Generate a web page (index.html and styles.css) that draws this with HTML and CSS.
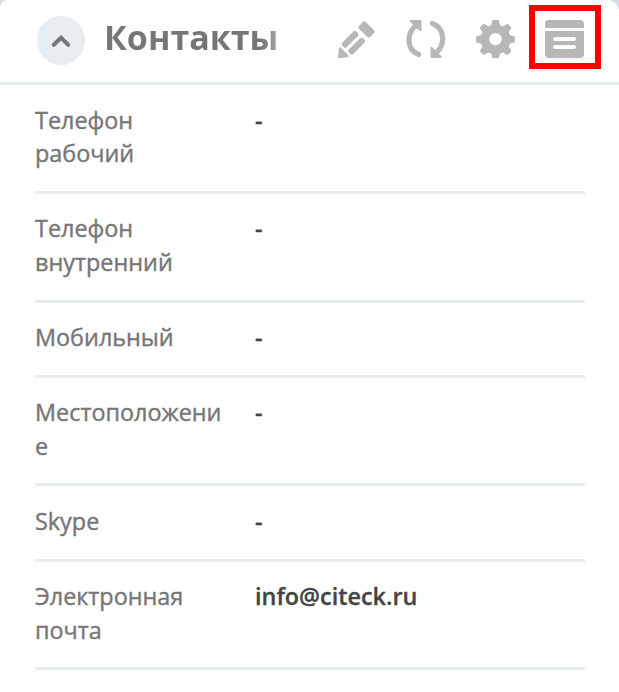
FILE: index.html
```html
<!DOCTYPE html>
<html lang="ru">
<head>
<meta charset="utf-8">
<title>Контакты</title>
<link rel="stylesheet" href="styles.css">
</head>
<body>
<main class="card">
  <header class="header">
    <button class="toggle" aria-label="Свернуть">
      <svg width="48" height="48" viewBox="0 0 48 48"><path d="M16.800 27.800 24 20.800l7.200 7"/></svg>
    </button>
    <h1 class="title">Контакты</h1>
    <nav class="actions">
      <svg class="icon" width="40" height="40" viewBox="0 0 40 40">
        <path d="M3.600 27.300Q2.200 26.500 2 28.500L1 36.500Q1 38.200 2.700 38L10.500 37.200Q12.500 36.800 11.300 35.300Z"/>
        <g transform="translate(1.500 37.500) rotate(-45)">
          <rect x="11" y="-7.800" width="20" height="6.300" rx="2"/>
          <rect x="11" y="1.600" width="20" height="6.300" rx="2"/>
          <rect x="34.800" y="-7.800" width="9.600" height="15.700" rx="2"/>
        </g>
      </svg>
      <svg class="icon" width="40" height="40" viewBox="0 0 40 40">
        <path class="arc" d="M10.500 5C.3 13-.2 29.500 12.600 34.500M26.300 3.300C39.500 8.500 39.500 25 29.500 33.500"/>
        <path d="M4.500 0Q3.300 0 3.700 1.500L7 4.500l5 5 2.300 1.700q1.200.3 1.200-1V1.200q0-1.200-1.200-1.200Z"/>
        <path d="M34.800 38Q36 38 35.600 36.300L32.500 33.500l-5-5-1.800-1.700q-1.200-.3-1.200 1v9q0 1.200 1.200 1.200Z"/>
      </svg>
      <svg class="icon" width="40" height="40" viewBox="0 0 40 40">
        <path fill-rule="evenodd" d="M17.300 0h4.600q1 0 1.200 1l.8 4.100 3.200 1.300 3.500-2.300q.8-.5 1.500.1l2.900 2.900q.7.700.1 1.500l-2.300 3.500 1.300 3.200 3.800.8q1 .2 1 1.200v4.200q0 1-1 1.200l-3.800.8-1.300 3.200 2.300 3.500q.6.800-.1 1.500l-2.900 2.900q-.7.600-1.500.1l-3.500-2.300-3.200 1.300-.8 3.500q-.2 1-1.200 1h-4.600q-1 0-1.200-1l-.8-3.500-3.200-1.300-3.500 2.300q-.8.500-1.500-.1l-2.900-2.900q-.7-.7-.1-1.500l2.300-3.500-1.300-3.200-4.100-.8q-1-.2-1-1.200v-4.200q0-1 1-1.200l4.100-.8 1.300-3.200-2.300-3.500q-.6-.8.1-1.500l2.900-2.900q.7-.6 1.500-.1l3.500 2.300 3.200-1.300.8-4.100q.2-1 1.200-1ZM19.500 13a6.200 6.200 0 1 0 0 12.400 6.200 6.200 0 0 0 0-12.400Z"/>
      </svg>
      <span class="highlight">
        <svg class="icon" width="40" height="40" viewBox="0 0 40 40">
          <path d="M4 0h31q4 0 4 4v4H0V4Q0 0 4 0Z"/>
          <path fill-rule="evenodd" d="M0 11h39v23q0 4-4 4H4q-4 0-4-4ZM10 17a2 2 0 0 0 0 4h19a2 2 0 0 0 0-4ZM10 25a2 2 0 0 0 0 4h19a2 2 0 0 0 0-4Z"/>
        </svg>
      </span>
    </nav>
  </header>
  <dl class="fields">
    <div class="row"><dt>Телефон рабочий</dt><dd>-</dd></div>
    <div class="row"><dt>Телефон внутренний</dt><dd>-</dd></div>
    <div class="row"><dt>Мобильный</dt><dd>-</dd></div>
    <div class="row"><dt>Местоположение</dt><dd>-</dd></div>
    <div class="row"><dt>Skype</dt><dd>-</dd></div>
    <div class="row"><dt>Электронная почта</dt><dd>info@citeck.ru</dd></div>
  </dl>
</main>
</body>
</html>
```
FILE: styles.css
```css
* { box-sizing: border-box; }
body {
  margin: 0;
  background: #d5dee2;
  font-family: "Open Sans", "Noto Sans", sans-serif;
  font-size: 23.4px;
  line-height: 33.7px;
}
.card {
  height: 692px;
  overflow: hidden;
  background: #fff;
  border-radius: 8px 12px 0 0;
}
.header {
  display: flex;
  height: 85px;
  padding: 5px 18px 0 37px;
  border-bottom: 3px solid #e6ecee;
}
.toggle {
  width: 48px;
  height: 49px;
  margin-top: 11px;
  padding: 0;
  border: 0;
  border-radius: 50%;
  background: #e7edf0;
}
.toggle svg {
  display: block;
  fill: none;
  stroke: #767676;
  stroke-width: 4;
  stroke-linecap: round;
}
.title {
  margin: 8px 0 0 19px;
  font-size: 34px;
  line-height: 48px;
  font-weight: 700;
  white-space: nowrap;
  color: transparent;
  background: linear-gradient(90deg, #767676 90%, #aaa 100%);
  -webkit-background-clip: text;
  background-clip: text;
}
.actions {
  display: flex;
  flex: 1;
  justify-content: flex-end;
  gap: 29.5px;
}
.icon {
  display: block;
  margin-top: 15px;
  fill: #b7b7b7;
}
.arc {
  fill: none;
  stroke: #b7b7b7;
  stroke-width: 5.2;
  stroke-linecap: round;
}
.highlight {
  width: 72px;
  height: 64px;
  margin-left: -16px;
  border: 6px solid #f00;
}
.highlight .icon { margin: 9px 0 0 10px; }
.fields {
  margin: 0;
  padding: 0 34px 0 35px;
}
.row {
  display: grid;
  grid-template-columns: 190px 1fr;
  column-gap: 30px;
  padding: 18.6px 0 19.8px;
  border-bottom: 3px solid #e7ecee;
}
dt {
  color: #767676;
  font-weight: 400;
  -webkit-text-stroke: 0.4px #767676;
  overflow-wrap: anywhere;
}
dd {
  margin: 0;
  color: #444;
  font-weight: 600;
  -webkit-text-stroke: 0.3px #444;
}
```
